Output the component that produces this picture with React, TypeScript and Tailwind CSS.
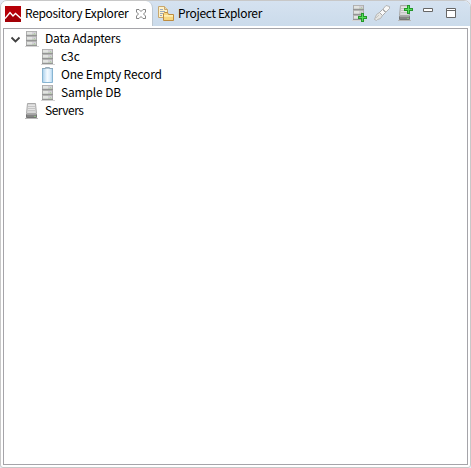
import React from "react";

function DatabaseIcon() {
  return (
    <svg width="16" height="16" viewBox="0 0 16 16" shapeRendering="crispEdges" className="shrink-0">
      <path d="M1 15h14v1H1z" fill="#d4d4d4" />
      {[0, 5, 10].map((y) => (
        <g key={y}>
          <path d={`M2 ${y}h11v5H2z`} fill="#adadad" />
          <path d={`M3 ${y}h9v1H3z`} fill="#b4b4b4" />
          <path d={`M3 ${y + 1}h5v2H3z`} fill="#e2e4e1" />
          <path d={`M8 ${y + 1}h4v2H8z`} fill="#d3cfd7" />
          <path d={`M3 ${y + 3}h5v1H3z`} fill="#cfd1d0" />
          <path d={`M8 ${y + 3}h4v1H8z`} fill="#bdcbb6" />
          <path d={`M10 ${y + 2}h1v1h-1z`} fill="#b3cda9" />
          <path d={`M2 ${y + 4}h11v1H2z`} fill="#959595" />
        </g>
      ))}
    </svg>
  );
}

function ServerIcon() {
  return (
    <svg width="16" height="16" viewBox="0 0 16 16" className="shrink-0">
      <path d="M3.5.5h8l1 10h-10z" fill="#d8d8d8" stroke="#a9a9a9" />
      <path d="M4 3.5h7M4 5.5h7M4 7.5h7" stroke="#c5c5c5" />
      <path d="M4 2.5h7M4 4.5h7M4 6.5h7" stroke="#e5e5e5" />
      <path d="M2.5 11.5h10v3h-10z" fill="#858585" stroke="#747474" />
      <path d="M3 11.5h9" stroke="#a4a4a4" />
      <path d="M1 15.5h13" stroke="#b9b9b9" />
      <path d="M10 13.5h2" stroke="#8dbb84" />
    </svg>
  );
}

function RecordIcon() {
  return (
    <svg width="16" height="16" viewBox="0 0 16 16" className="shrink-0">
      <defs>
        <linearGradient id="record-fill">
          <stop stopColor="#a7cee9" /><stop offset=".28" stopColor="#d5e9f8" />
          <stop offset=".48" stopColor="#f4faff" /><stop offset=".75" stopColor="#deeffc" /><stop offset="1" stopColor="#abd0ec" />
        </linearGradient>
      </defs>
      <path d="M2.5 1.5h10v14h-10z" fill="url(#record-fill)" stroke="#88b5d2" />
      <path d="M2 1.5h11" stroke="#8ba6b8" />
      <path d="M5.5 1.5v-1h4v1" fill="#d5e1e9" stroke="#98aab7" />
    </svg>
  );
}

function ProjectIcon() {
  return (
    <svg width="16" height="16" viewBox="0 0 16 16" className="shrink-0">
      <path d="M.5.5h6l3 3v8h-9z" fill="#fff2c9" stroke="#c7a76e" />
      <path d="M6.5.5v3h3" fill="#e9d5a7" stroke="#c7a76e" />
      <path d="M2 3.5h3M2 5.5h5M2 7.5h3M2 9.5h2" stroke="#9baabd" />
      <path d="M5.5 14.5v-7l1-1h3l1 2h5v6z" fill="#f8d780" stroke="#bd8c40" />
      <path d="M6 9.5h9" stroke="#fff0b4" />
      <path d="M6 10.5h9" stroke="#fce8a7" />
    </svg>
  );
}

function AddBadge({ upper = false }: { upper?: boolean }) {
  return (
    <svg width="9" height="9" viewBox="0 0 9 9" shapeRendering="crispEdges" className={upper ? "absolute right-0 top-0" : "absolute -bottom-px right-0"}>
      <path d="M3 0h3v3h3v3H6v3H3V6H0V3h3z" fill="#24962b" />
      <path d="M4 1h1v3h3v1H5v3H4V5H1V4h3z" fill="#55df59" />
    </svg>
  );
}

function TreeRow({ icon, label, spacing, child = false, expanded = false }: {
  icon: React.ReactNode; label: string; spacing: string; child?: boolean; expanded?: boolean;
}) {
  return (
    <div className={child ? "flex h-[18px] items-center pl-[36px]" : "flex h-[18px] items-center pl-[5px]"}>
      {!child && (
        <span className="w-[15px]">
          {expanded && <svg width="13" height="12" viewBox="0 0 13 12"><path d="m2.5 4.5 4 4 4-4" fill="none" stroke="#404040" strokeWidth="1.8" /></svg>}
        </span>
      )}
      {icon}
      <span className={`-mt-[2px] ml-[5px] whitespace-nowrap leading-[18px] ${spacing}`}>{label}</span>
    </div>
  );
}

export default function App() {
  return (
    <div className="h-[468px] w-[471px] overflow-hidden bg-[#e5ebf6] text-[12px] leading-4 text-black [font-family:'Noto_Sans_CJK_KR','Noto_Sans',sans-serif]">
      <main className="flex h-[468px] flex-col overflow-hidden rounded-t-[7px] rounded-b-[3px] border border-[#c8c8c8] bg-white">
        <header className="flex h-[25px] bg-linear-to-b from-[#d5e2f0] to-[#cbdbeb]">
          <div className="flex h-[25px] w-[152px] shrink-0 items-center rounded-tr-[7px] border-r border-[#bdc7d0] bg-white pl-1 pt-px">
            <svg width="16" height="16" viewBox="0 0 16 16" className="shrink-0">
              <path d="M0 0h16v16H0z" fill="#b60008" />
              <path d="m0 12 5-5 3 3 2.5-2 5.5 5v3H0z" fill="#a30007" />
              <path d="m0 12.5 5-6 3 3.5 2.5-2.5 5.5 5" fill="none" stroke="white" strokeWidth="1.4" />
            </svg>
            <span className="-mt-[2px] ml-[4px] w-[110px] shrink-0 whitespace-nowrap tracking-[-0.35px]">Repository Explorer</span>
            <svg width="12" height="12" viewBox="0 0 12 12" className="shrink-0">
              <path d="M1.5 1.5h2.5L6 3.5l2-2h2.5V4l-2 2 2 2v2.5H8l-2-2-2 2H1.5V8l2-2-2-2z" fill="white" stroke="#777" strokeWidth=".9" />
            </svg>
          </div>
          <div className="flex items-center pl-[5px] pt-px">
            <ProjectIcon />
            <span className="-mt-[2px] ml-[4px] whitespace-nowrap tracking-[-0.32px]">Project Explorer</span>
          </div>
          <div className="ml-auto flex h-6 items-center pr-[14px]">
            <span className="relative mr-[7px] h-4 w-4"><DatabaseIcon /><AddBadge /></span>
            <svg width="16" height="16" viewBox="0 0 16 16">
              <path d="m.5 14.5 2-5 3-2 3 3-2 3-3 1-1 1z" fill="#e6e6e3" stroke="#b4b4b4" />
              <path d="m5.5 7.5 3-3 3 3-3 3z" fill="#fafafa" stroke="#aaa" />
              <path d="m9 4 3-3.5 3.5 1v2L12 7z" fill="#f8f8f7" stroke="#b4b4b4" />
              <path d="m2 13 3-3" stroke="#c6c6c3" />
            </svg>
            <span className="relative ml-[7px] mr-[10px] h-4 w-4"><ServerIcon /><AddBadge upper /></span>
            <svg width="10" height="10" viewBox="0 0 10 10" className="mr-[13px]"><path d="M.5.5h9v3h-9z" fill="white" stroke="#666" /></svg>
            <svg width="10" height="10" viewBox="0 0 10 10"><path d="M.5.5h9v9h-9zM.5 2.5h9" fill="white" stroke="#666" /></svg>
          </div>
        </header>
        <section className="mx-[2px] mb-[2px] mt-[2px] flex-1 border border-[#a5a4a9] bg-white pt-px">
          <TreeRow icon={<DatabaseIcon />} label="Data Adapters" spacing="tracking-[-0.22px]" expanded />
          <TreeRow icon={<DatabaseIcon />} label="c3c" spacing="tracking-normal" child />
          <TreeRow icon={<RecordIcon />} label="One Empty Record" spacing="tracking-[-0.18px]" child />
          <TreeRow icon={<DatabaseIcon />} label="Sample DB" spacing="tracking-[-0.15px]" child />
          <TreeRow icon={<ServerIcon />} label="Servers" spacing="tracking-[-0.5px]" />
        </section>
      </main>
    </div>
  );
}
